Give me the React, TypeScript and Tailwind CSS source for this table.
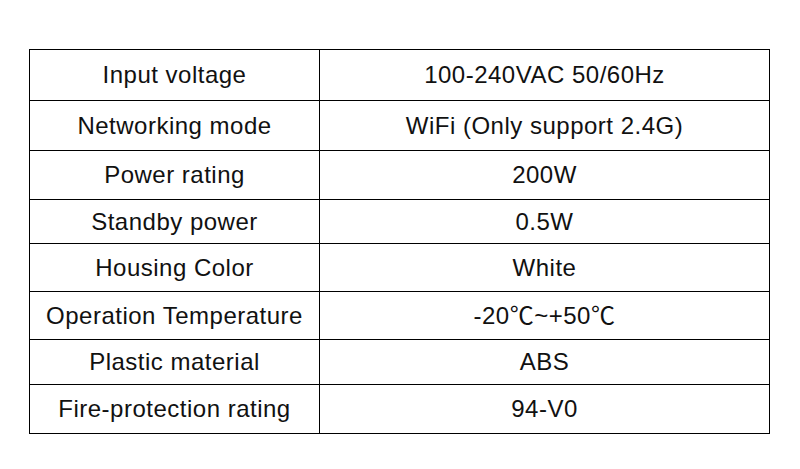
import React from "react";

const rows = [
  { label: "Input voltage", value: "100-240VAC 50/60Hz", h: "h-[51px]" },
  { label: "Networking mode", value: "WiFi (Only support 2.4G)", h: "h-[50px]" },
  { label: "Power rating", value: "200W", h: "h-[49px]" },
  { label: "Standby power", value: "0.5W", h: "h-[44px]" },
  { label: "Housing Color", value: "White", h: "h-[48px]" },
  { label: "Operation Temperature", value: "-20℃~+50℃", h: "h-[48px]" },
  { label: "Plastic material", value: "ABS", h: "h-[45px]" },
  { label: "Fire-protection rating", value: "94-V0", h: "h-[49px]" },
];

const SpecTable = () => {
  return (
    <div
      className="w-[800px] h-[469px] bg-white pt-[49px] pl-[29px] text-[#111]"
      style={{ fontFamily: '"Liberation Sans", "Noto Sans CJK SC", sans-serif' }}
    >
      <div className="w-[741px] border-l border-t border-black">
        {rows.map((row) => (
          <div key={row.label} className={`flex ${row.h}`}>
            <div className="w-[290px] flex items-center justify-center border-r border-b border-black text-[24px] tracking-[0.5px]">
              {row.label}
            </div>
            <div className="flex-1 flex items-center justify-center border-r border-b border-black text-[24px] tracking-[0.5px]">
              {row.value}
            </div>
          </div>
        ))}
      </div>
    </div>
  );
};

export default SpecTable;
